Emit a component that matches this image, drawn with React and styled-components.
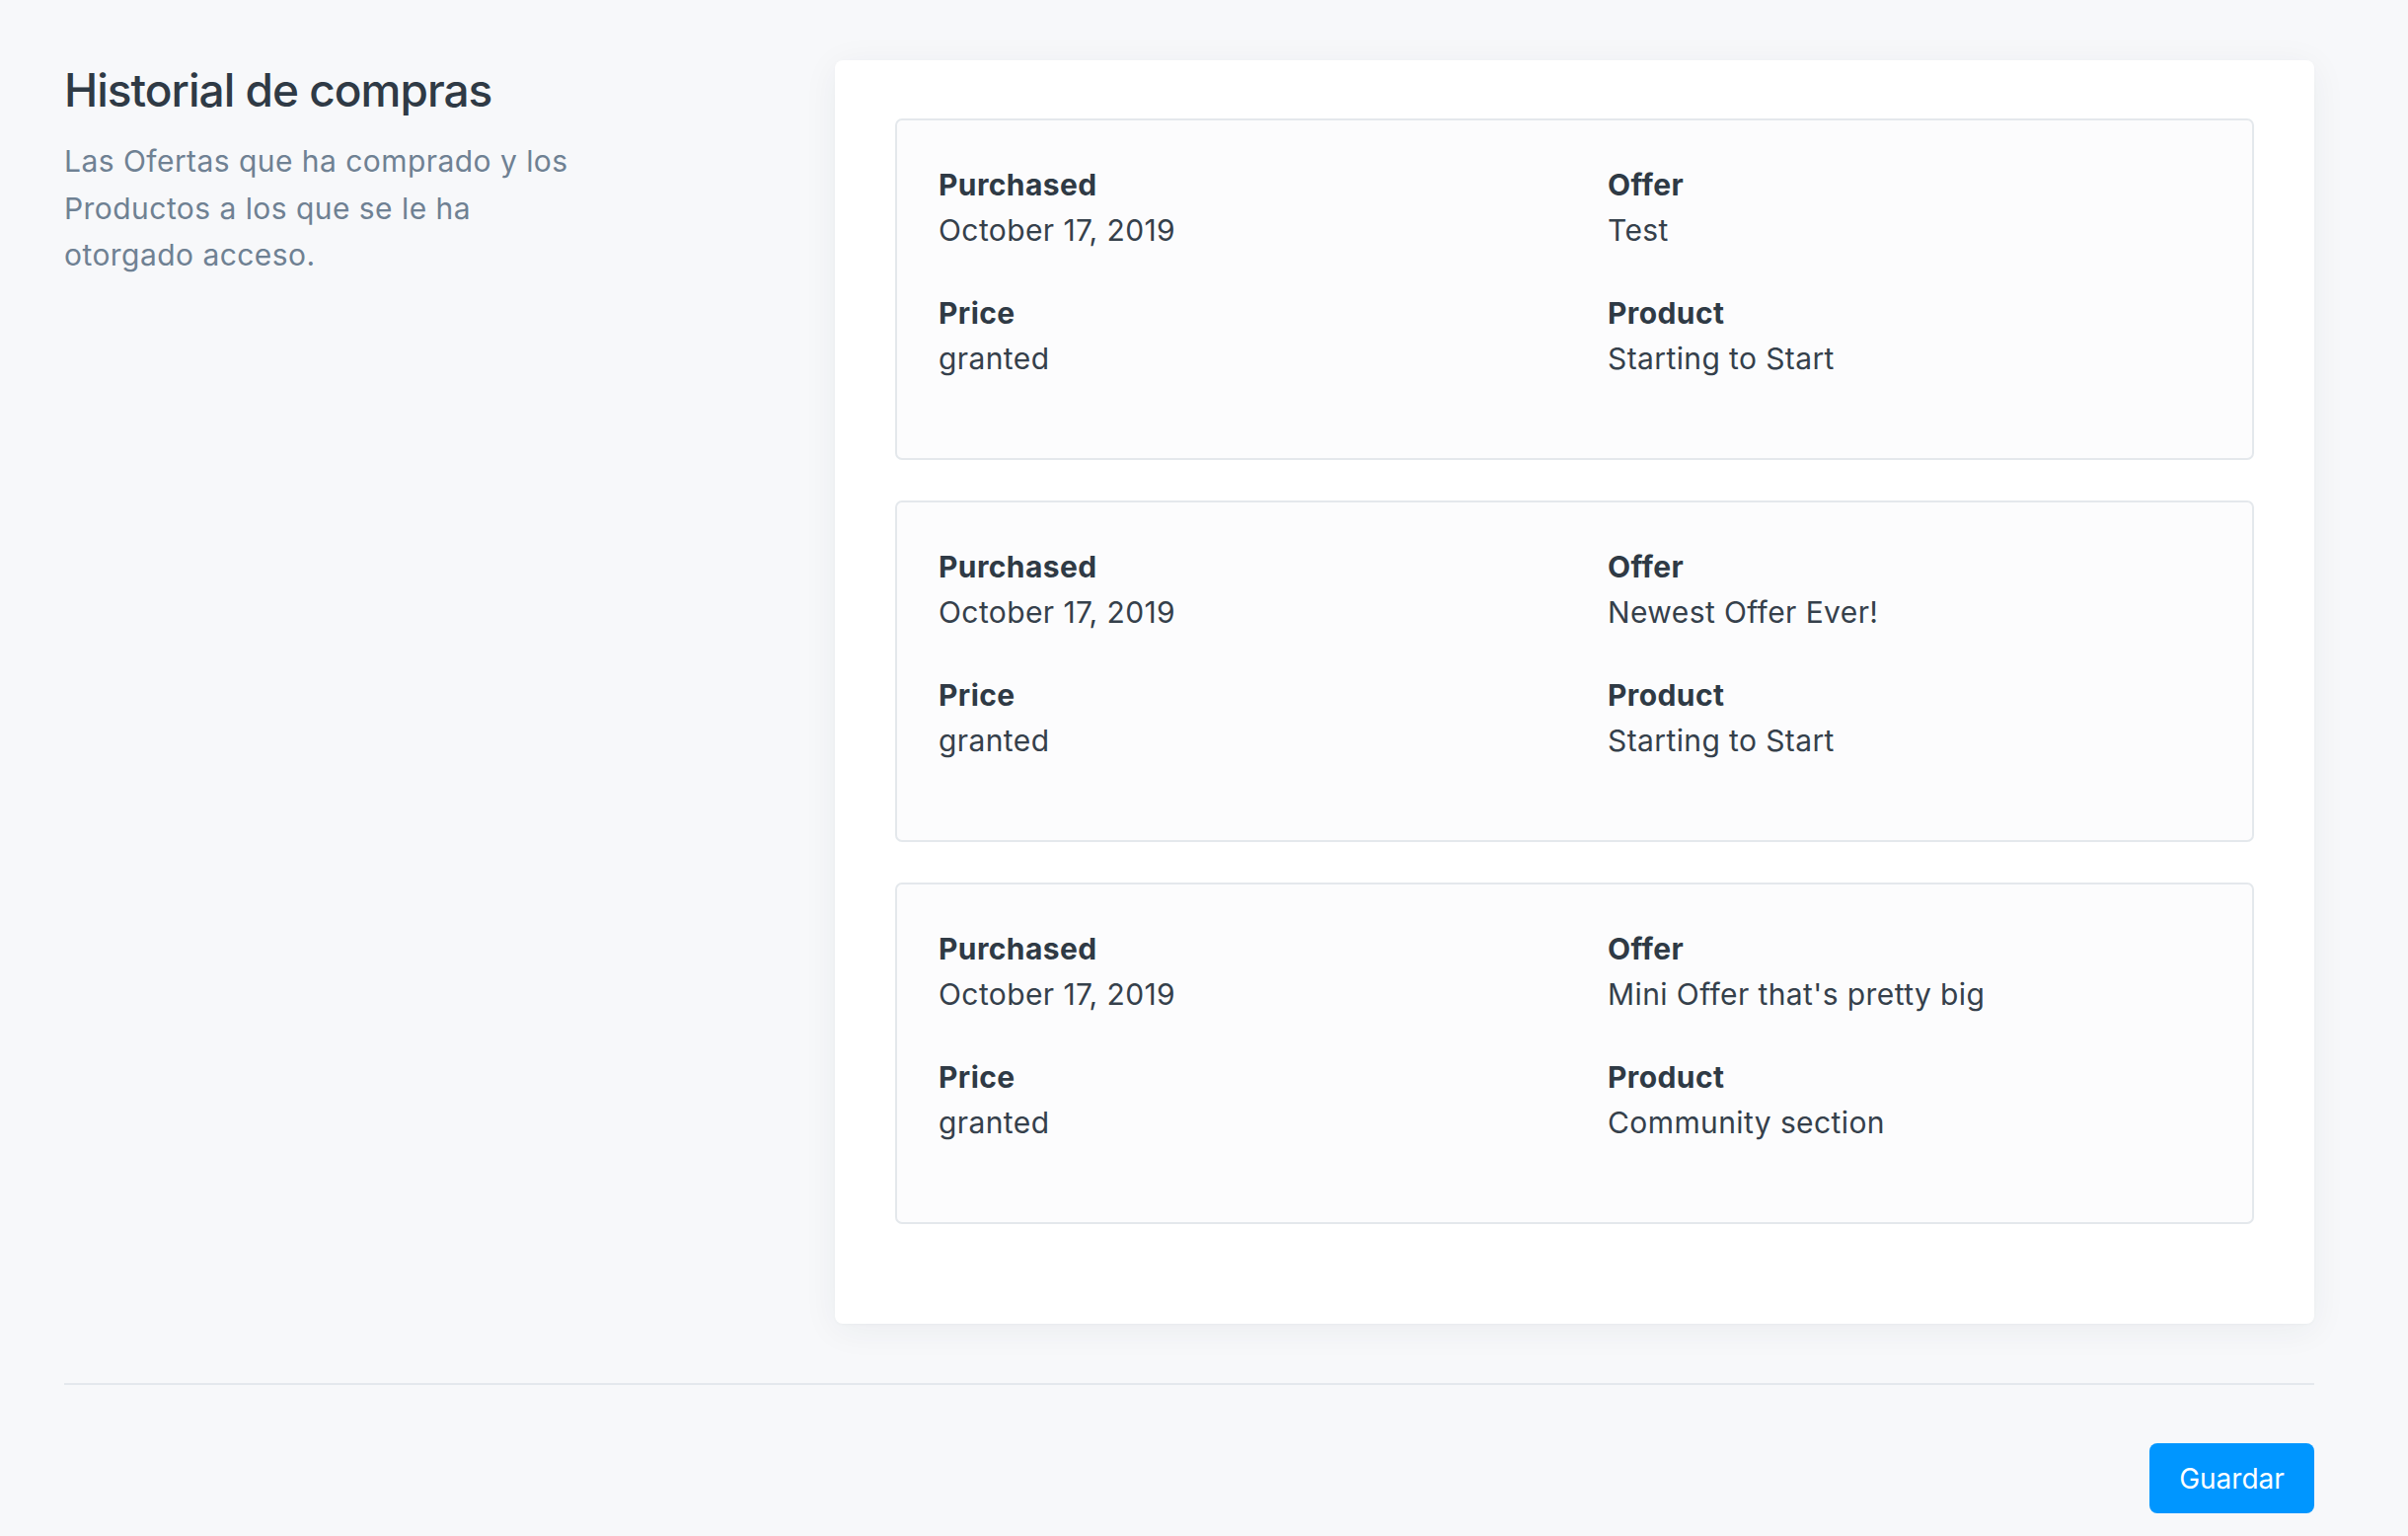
import React from 'react'
import styled, { createGlobalStyle } from 'styled-components'

const GlobalStyle = createGlobalStyle`
  html, body {
    margin: 0;
    padding: 0;
    background: #f7f8fa;
  }
  body {
    font-family: 'Inter', 'Noto Sans', sans-serif;
    color: #313c47;
    -webkit-font-smoothing: antialiased;
  }
  * {
    box-sizing: border-box;
  }
`

const Page = styled.div`
  min-height: 1556px;
  padding: 61px 95px 0 65px;
`

const Section = styled.section`
  display: grid;
  grid-template-columns: 781px 1fr;
  align-items: start;
`

const Intro = styled.div`
  display: flex;
  flex-direction: column;
  gap: 19px;
`

const Title = styled.h2`
  margin: 0;
  font-size: 46px;
  line-height: 60px;
  font-weight: 500;
  color: #2f3a45;
  letter-spacing: -1px;
`

const Description = styled.p`
  margin: 0;
  max-width: 525px;
  font-size: 30px;
  line-height: 47.5px;
  letter-spacing: 0.45px;
  color: #6f8193;
`

const Card = styled.div`
  background: #ffffff;
  border-radius: 8px;
  padding: 59px 61px 60px;
  box-shadow: 0 6px 36px rgba(40, 50, 70, 0.06), 0 1px 3px rgba(40, 50, 70, 0.03);
`

const Purchase = styled.div`
  display: grid;
  grid-template-columns: 1fr 1fr;
  column-gap: 67px;
  padding: 42px 42px 40px;
  margin-bottom: 41px;
  background: #fcfcfd;
  border: 2px solid #e4e8ec;
  border-radius: 7px;
`

const Field = styled.div`
  margin-bottom: 38px;
  font-size: 30px;
  line-height: 46px;
  letter-spacing: 0.4px;
`

const Label = styled.div`
  font-weight: 700;
  color: #2f3a45;
`

const Value = styled.div`
  font-weight: 400;
  color: #35404b;
`

const Divider = styled.hr`
  margin: 60px 0 59px;
  border: 0;
  border-top: 2px solid #e4e8ed;
`

const Actions = styled.div`
  display: flex;
  justify-content: flex-end;
`

const Button = styled.button`
  width: 167px;
  height: 71px;
  border: 0;
  border-radius: 8px;
  background: #0096ff;
  color: #ffffff;
  font-family: inherit;
  font-size: 28px;
  font-weight: 400;
  cursor: pointer;
`

const purchases = [
  { date: 'October 17, 2019', offer: 'Test', price: 'granted', product: 'Starting to Start' },
  { date: 'October 17, 2019', offer: 'Newest Offer Ever!', price: 'granted', product: 'Starting to Start' },
  { date: 'October 17, 2019', offer: "Mini Offer that's pretty big", price: 'granted', product: 'Community section' }
]

const Info = ({ label, value }) => (
  <Field>
    <Label>{label}</Label>
    <Value>{value}</Value>
  </Field>
)

export default function App () {
  return (
    <Page>
      <GlobalStyle />
      <Section>
        <Intro>
          <Title>Historial de compras</Title>
          <Description>
            Las Ofertas que ha comprado y los Productos a los que se le ha otorgado acceso.
          </Description>
        </Intro>
        <Card>
          {purchases.map((p, i) => (
            <Purchase key={i}>
              <Info label='Purchased' value={p.date} />
              <Info label='Offer' value={p.offer} />
              <Info label='Price' value={p.price} />
              <Info label='Product' value={p.product} />
            </Purchase>
          ))}
        </Card>
      </Section>
      <Divider />
      <Actions>
        <Button>Guardar</Button>
      </Actions>
    </Page>
  )
}
